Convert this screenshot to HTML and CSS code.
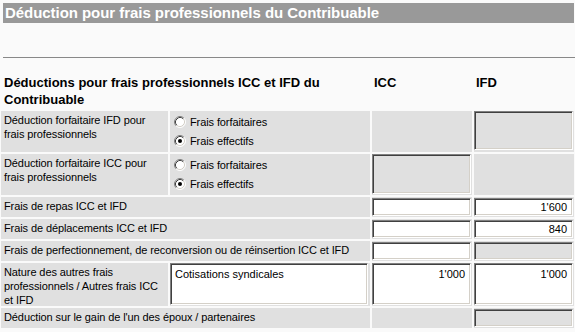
FILE: index.html
```html
<!DOCTYPE html>
<html lang="fr">
<head>
<meta charset="utf-8">
<title>Déduction pour frais professionnels</title>
<link rel="stylesheet" href="styles.css">
</head>
<body>
<div class="title">Déduction pour frais professionnels du Contribuable</div>
<div class="rule"></div>
<div class="grid">
  <div class="hd span2">Déductions pour frais professionnels ICC et IFD du Contribuable</div>
  <div class="hd hdc">ICC</div>
  <div class="hd hdc">IFD</div>

  <div class="c lbl">Déduction forfaitaire IFD pour frais professionnels</div>
  <div class="c radios">
    <div class="opt"><svg class="rb" viewBox="0 0 12 12" width="12" height="12"><circle cx="6" cy="6" r="5" fill="#fff"/><path d="M2.11 9.89A5.5 5.5 0 0 1 9.89 2.11" fill="none" stroke="#808080"/><path d="M9.89 2.11A5.5 5.5 0 0 1 2.11 9.89" fill="none" stroke="#fff"/><path d="M2.82 9.18A4.5 4.5 0 0 1 9.18 2.82" fill="none" stroke="#404040"/><path d="M9.18 2.82A4.5 4.5 0 0 1 2.82 9.18" fill="none" stroke="#d4d0c8"/></svg><span>Frais forfaitaires</span></div>
    <div class="opt"><svg class="rb" viewBox="0 0 12 12" width="12" height="12"><circle cx="6" cy="6" r="5" fill="#fff"/><path d="M2.11 9.89A5.5 5.5 0 0 1 9.89 2.11" fill="none" stroke="#808080"/><path d="M9.89 2.11A5.5 5.5 0 0 1 2.11 9.89" fill="none" stroke="#fff"/><path d="M2.82 9.18A4.5 4.5 0 0 1 9.18 2.82" fill="none" stroke="#404040"/><path d="M9.18 2.82A4.5 4.5 0 0 1 2.82 9.18" fill="none" stroke="#d4d0c8"/><circle cx="6" cy="6" r="2" fill="#000"/></svg><span>Frais effectifs</span></div>
  </div>
  <div class="c"></div>
  <div class="c"><div class="fld dis tall"></div></div>

  <div class="c lbl">Déduction forfaitaire ICC pour frais professionnels</div>
  <div class="c radios">
    <div class="opt"><svg class="rb" viewBox="0 0 12 12" width="12" height="12"><circle cx="6" cy="6" r="5" fill="#fff"/><path d="M2.11 9.89A5.5 5.5 0 0 1 9.89 2.11" fill="none" stroke="#808080"/><path d="M9.89 2.11A5.5 5.5 0 0 1 2.11 9.89" fill="none" stroke="#fff"/><path d="M2.82 9.18A4.5 4.5 0 0 1 9.18 2.82" fill="none" stroke="#404040"/><path d="M9.18 2.82A4.5 4.5 0 0 1 2.82 9.18" fill="none" stroke="#d4d0c8"/></svg><span>Frais forfaitaires</span></div>
    <div class="opt"><svg class="rb" viewBox="0 0 12 12" width="12" height="12"><circle cx="6" cy="6" r="5" fill="#fff"/><path d="M2.11 9.89A5.5 5.5 0 0 1 9.89 2.11" fill="none" stroke="#808080"/><path d="M9.89 2.11A5.5 5.5 0 0 1 2.11 9.89" fill="none" stroke="#fff"/><path d="M2.82 9.18A4.5 4.5 0 0 1 9.18 2.82" fill="none" stroke="#404040"/><path d="M9.18 2.82A4.5 4.5 0 0 1 2.82 9.18" fill="none" stroke="#d4d0c8"/><circle cx="6" cy="6" r="2" fill="#000"/></svg><span>Frais effectifs</span></div>
  </div>
  <div class="c"><div class="fld dis tall2"></div></div>
  <div class="c"></div>

  <div class="c lbl span2">Frais de repas ICC et IFD</div>
  <div class="c"><div class="fld line"></div></div>
  <div class="c"><div class="fld line">1'600</div></div>

  <div class="c lbl span2">Frais de déplacements ICC et IFD</div>
  <div class="c"><div class="fld line"></div></div>
  <div class="c"><div class="fld line">840</div></div>

  <div class="c lbl span2">Frais de perfectionnement, de reconversion ou de réinsertion ICC et IFD</div>
  <div class="c"><div class="fld line"></div></div>
  <div class="c"><div class="fld line dis"></div></div>

  <div class="c lbl">Nature des autres frais professionnels / Autres frais ICC et IFD</div>
  <div class="c"><div class="fld area left">Cotisations syndicales</div></div>
  <div class="c"><div class="fld area">1'000</div></div>
  <div class="c"><div class="fld area">1'000</div></div>

  <div class="c lbl span2">Déduction sur le gain de l'un des époux / partenaires</div>
  <div class="c"></div>
  <div class="c"><div class="fld line dis"></div></div>
</div>
</body>
</html>
```

FILE: styles.css
```css
body {
  margin: 0;
  background: #fafafa;
  font-family: "Liberation Sans", Arial, sans-serif;
  font-size: 11px;
  color: #000;
}

.title {
  margin: 3px 1px 0 3px;
  height: 20px;
  line-height: 20px;
  padding-left: 2px;
  background: #999999;
  color: #fff;
  font-size: 15px;
  font-weight: bold;
  letter-spacing: -0.05px;
}

.rule {
  height: 1px;
  background: #888888;
  margin: 34px 0 0 3px;
}

.grid {
  display: grid;
  grid-template-columns: 167px 200px 100px 100px;
  grid-template-rows: 38px 41px 41px 20px 20px 20px 43px 20px;
  gap: 2px;
  margin: 13px 0 0 1px;
}

.span2 {
  grid-column: span 2;
}

.hd {
  font-size: 13px;
  font-weight: bold;
  line-height: 17px;
  padding: 3px 3px 0;
}

.hdc {
  padding: 3px 2px 0;
}

.c {
  background: #e0e0e0;
}

.lbl {
  padding: 2px 3px;
  line-height: 14px;
  letter-spacing: -0.1px;
}

.radios {
  padding: 1px 4px;
  letter-spacing: -0.1px;
}

.opt {
  display: flex;
  align-items: center;
  gap: 4px;
  height: 19px;
}

.rb {
  display: block;
  flex: none;
}

.fld {
  box-sizing: border-box;
  width: calc(100% - 1px);
  background: #fff;
  border: 1px solid;
  border-color: #808080 #ffffff #ffffff #808080;
  box-shadow: inset 1px 1px 0 #404040, inset -1px -1px 0 #d4d0c8;
  text-align: right;
  padding: 0 5px;
  line-height: 16px;
}

.fld.dis {
  background: #e0e0e0;
}

.fld.line {
  height: 18px;
  margin-top: 1px;
}

.fld.tall {
  height: 39px;
}

.fld.tall2 {
  height: 40px;
}

.fld.area {
  height: 42px;
  padding-top: 2px;
}

.fld.left {
  text-align: left;
  padding-left: 4px;
  width: 198px;
}
```
